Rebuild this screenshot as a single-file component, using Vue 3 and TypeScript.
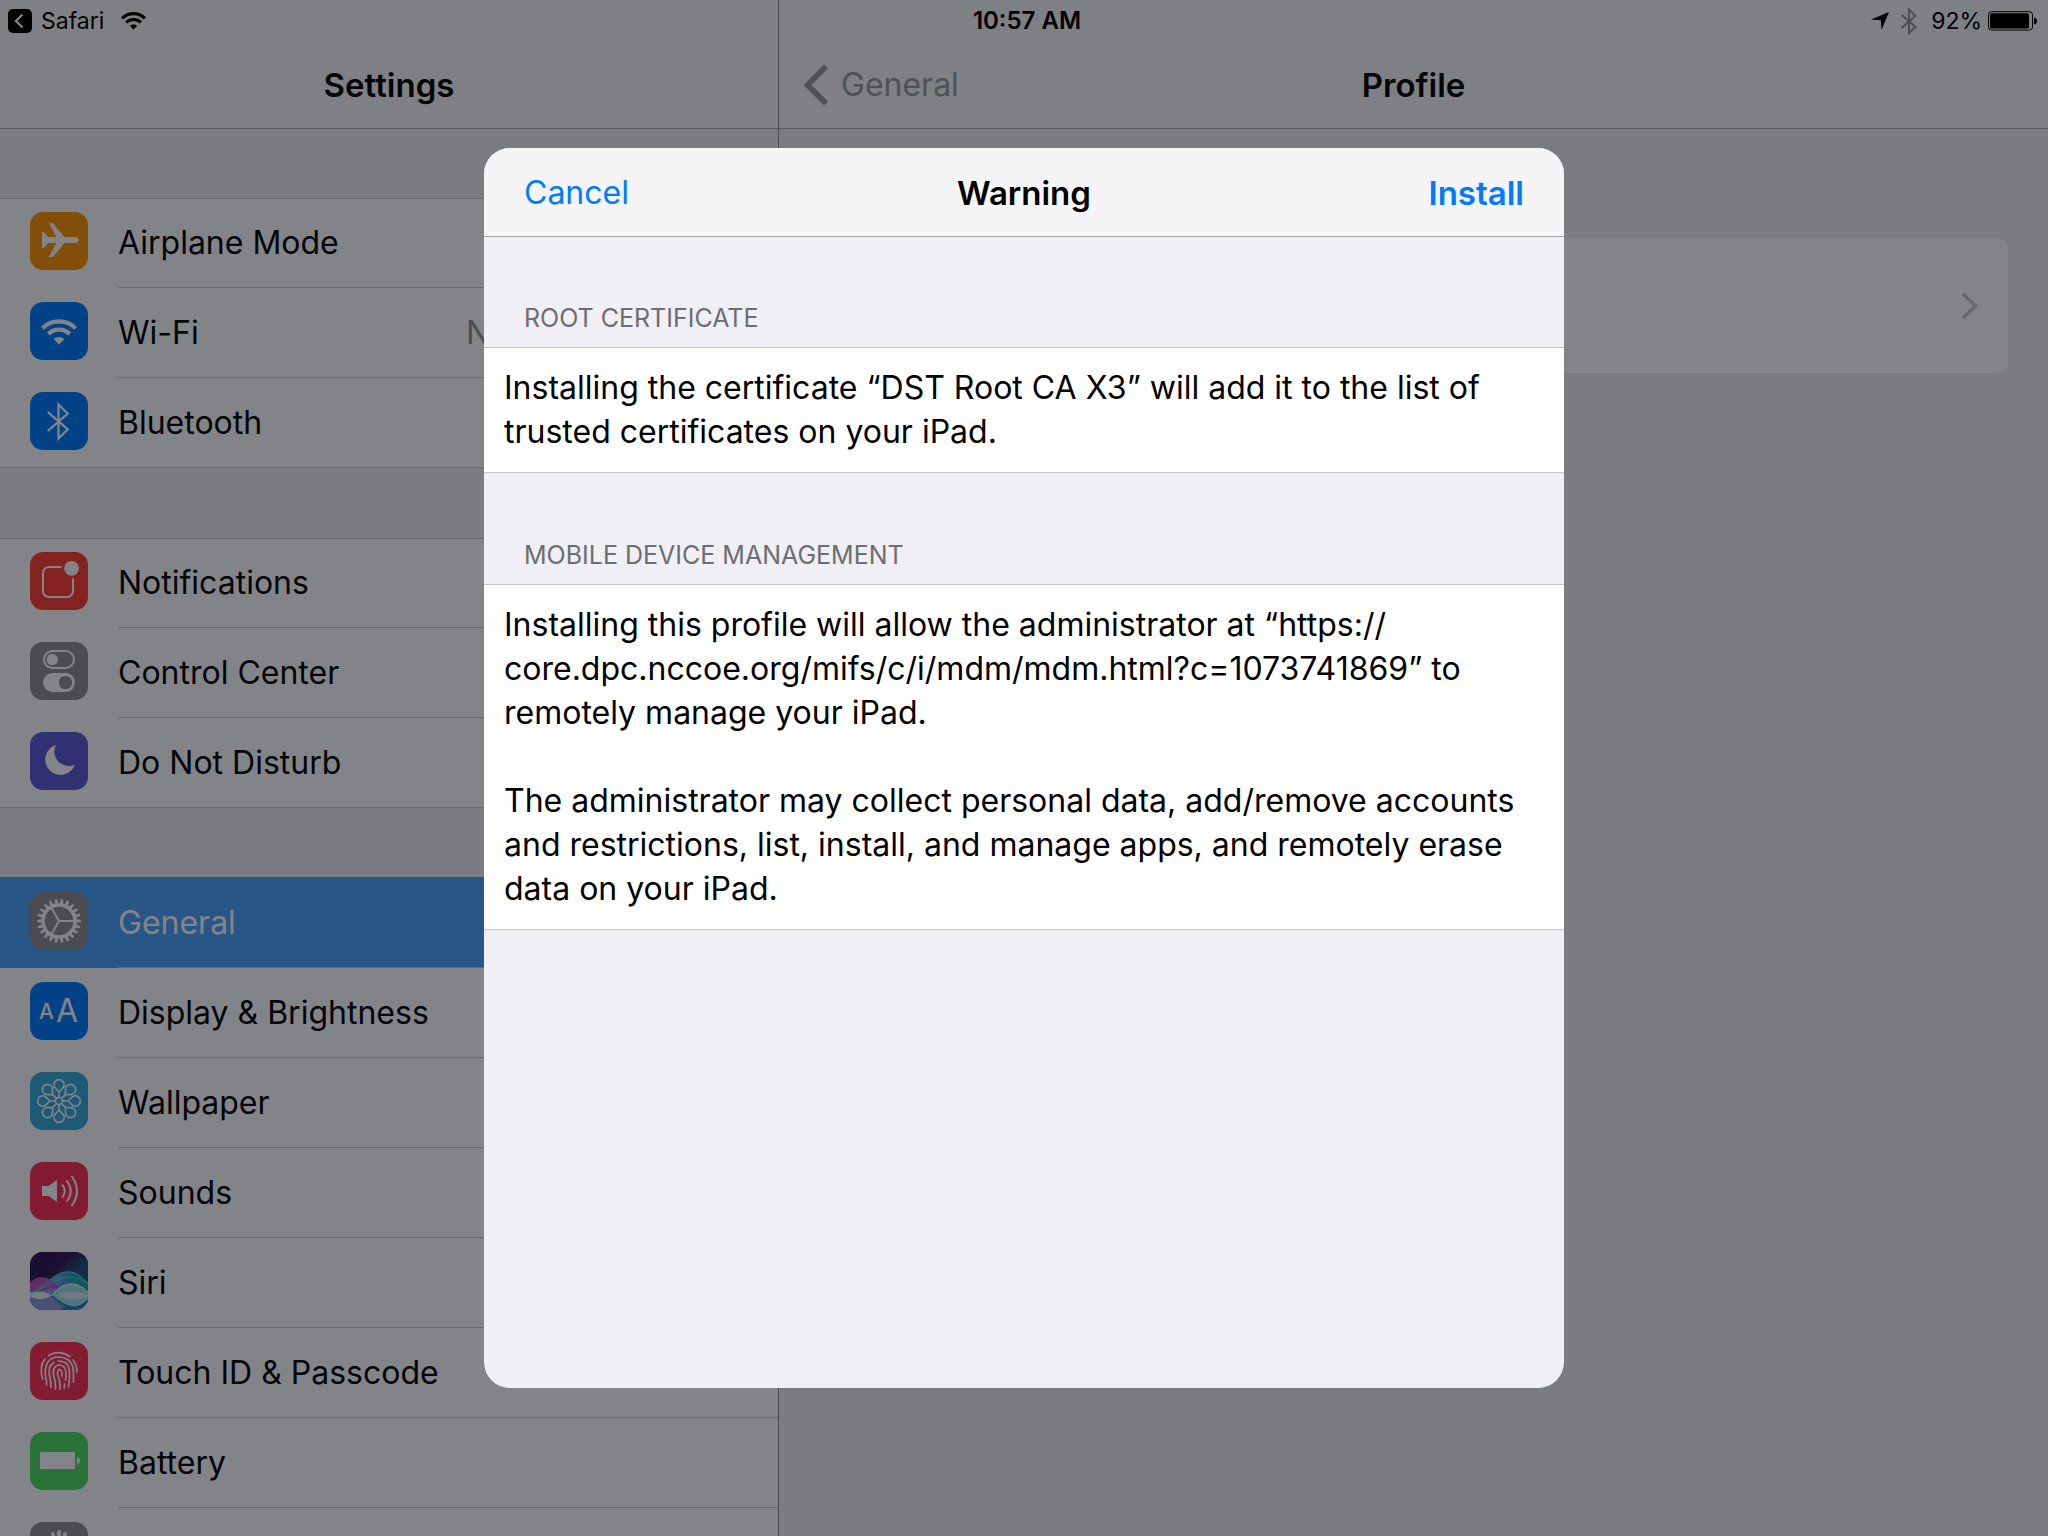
<script setup lang="ts">
import { ref } from 'vue'

interface Row {
  id: string
  label: string
  color: string
  value?: string
}

const groups: Row[][] = [
  [
    { id: 'airplane', label: 'Airplane Mode', color: '#ff9500' },
    { id: 'wifi', label: 'Wi-Fi', color: '#007aff', value: 'N' },
    { id: 'bluetooth', label: 'Bluetooth', color: '#007aff' },
  ],
  [
    { id: 'notifications', label: 'Notifications', color: '#ff3b30' },
    { id: 'control', label: 'Control Center', color: '#8e8e93' },
    { id: 'dnd', label: 'Do Not Disturb', color: '#5856d6' },
  ],
  [
    { id: 'general', label: 'General', color: '#8e8e93' },
    { id: 'display', label: 'Display & Brightness', color: '#007aff' },
    { id: 'wallpaper', label: 'Wallpaper', color: '#34aadc' },
    { id: 'sounds', label: 'Sounds', color: '#ff2d55' },
    { id: 'siri', label: 'Siri', color: '#25104f' },
    { id: 'touch', label: 'Touch ID & Passcode', color: '#ff2d55' },
    { id: 'battery', label: 'Battery', color: '#4cd964' },
    { id: 'privacy', label: '', color: '#8e8e93' },
  ],
]

const selected = ref('general')

// Tapered gear teeth around the centre of a 58 unit square.
const teethCount = 22
const step = (Math.PI * 2) / teethCount
const point = (radius: number, angle: number) =>
  `${(29 + radius * Math.cos(angle)).toFixed(2)} ${(29 + radius * Math.sin(angle)).toFixed(2)}`
const gearTeeth = Array.from({ length: teethCount }, (_, i) => {
  const a = i * step
  return `M${point(17, a - 0.1)}L${point(22, a - 0.05)}L${point(22, a + 0.05)}L${point(17, a + 0.1)}Z`
}).join('')

const petals = Array.from({ length: 8 }, (_, i) => i * 45)
</script>

<template>
  <div class="screen">
    <div class="split">
      <aside class="sidebar">
        <header class="nav">
          <h1 class="nav-title">Settings</h1>
        </header>
        <nav class="list">
          <ul v-for="(group, g) in groups" :key="g" class="group">
            <li v-for="row in group" :key="row.id">
              <button
                type="button"
                class="row"
                :class="{ selected: row.id === selected }"
                :aria-label="row.label || 'Privacy'"
                @click="selected = row.id"
              >
                <svg class="icon" viewBox="0 0 58 58" aria-hidden="true">
                  <rect width="58" height="58" rx="13" :fill="row.color" />
                  <path
                    v-if="row.id === 'airplane'"
                    fill="#fff"
                    d="M12 20q1-.8 1.800 0L18 25h8.300L19.300 12q-.3-1 .7-1h2.200q.8 0 1.300.7L34.300 25H45.500q3.500.3 3.500 3t-3.500 3H34.300L23.500 44.300q-.5.7-1.300.7H20q-1 0-.7-1L26.300 31H18l-4.200 5q-.8.800-1.800 0z"
                  />
                  <g v-else-if="row.id === 'wifi'" fill="none" stroke="#fff" stroke-width="4.200">
                    <path d="M12.400 26.200a23.500 23.500 0 0 1 33.200 0M18.300 32.100a15.200 15.200 0 0 1 21.400 0" />
                    <path d="M29 42.700l-5.400-5.700a8.300 8.300 0 0 1 10.800 0z" fill="#fff" stroke="none" />
                  </g>
                  <path
                    v-else-if="row.id === 'bluetooth'"
                    fill="none"
                    stroke="#fff"
                    stroke-width="2.300"
                    d="M17.800 20L37.700 37.300L28.500 46.500V12.500L37.700 21.700L17.800 39"
                  />
                  <g v-else-if="row.id === 'notifications'">
                    <rect x="13" y="15" width="30" height="30" rx="6" fill="none" stroke="#fff" stroke-width="2" />
                    <circle cx="41.600" cy="16.300" r="10.300" fill="#ff3b30" />
                    <circle cx="41.600" cy="16.300" r="7.400" fill="#fff" />
                  </g>
                  <g v-else-if="row.id === 'control'">
                    <rect x="14" y="9" width="30" height="17" rx="8.500" fill="none" stroke="#fff" stroke-width="2" />
                    <circle cx="22.300" cy="17.500" r="5.700" fill="#fff" />
                    <rect x="13" y="31" width="32" height="19" rx="9.500" fill="#fff" />
                    <circle cx="35.500" cy="40.500" r="6.600" fill="#8e8e93" />
                  </g>
                  <path
                    v-else-if="row.id === 'dnd'"
                    fill="#fff"
                    d="M26 13A15.300 15.300 0 1 0 45 32.500A14.300 14.300 0 0 1 26 13Z"
                  />
                  <g v-else-if="row.id === 'general'">
                    <path :d="gearTeeth" fill="#fff" />
                    <circle cx="29" cy="29" r="16" fill="none" stroke="#fff" stroke-width="3.400" />
                    <path d="M29 29H44M29 29L21.500 16M29 29L21.500 42" stroke="#fff" stroke-width="2" />
                  </g>
                  <g v-else-if="row.id === 'display'" fill="#fff" class="letters">
                    <text x="9" y="37" font-size="21" font-weight="500">A</text>
                    <text x="26" y="40" font-size="32">A</text>
                  </g>
                  <g
                    v-else-if="row.id === 'wallpaper'"
                    fill="none"
                    stroke="#fff"
                    stroke-width="1.600"
                    stroke-linejoin="round"
                  >
                    <circle cx="29" cy="29" r="3.500" />
                    <path
                      v-for="a in petals"
                      :key="a"
                      d="M29 25.500V20L24.200 14.800A5.200 5.200 0 1 1 33.800 14.800L29 20"
                      :transform="`rotate(${a} 29 29)`"
                    />
                  </g>
                  <g v-else-if="row.id === 'sounds'">
                    <path d="M12 24h6.500L27 18v22l-8.500-6H12z" fill="#fff" />
                    <path
                      d="M32.500 23q4.500 6 0 12M37 19q7.500 10 0 20M42 14.500q10 14.500 0 29"
                      fill="none"
                      stroke="#fff"
                      stroke-width="2"
                      stroke-linecap="round"
                    />
                  </g>
                  <g v-else-if="row.id === 'siri'">
                    <defs>
                      <linearGradient id="siri-sky" x1="0" y1="0" x2="1" y2="1">
                        <stop offset="0" stop-color="#2a1062" />
                        <stop offset=".35" stop-color="#321550" />
                        <stop offset=".6" stop-color="#1d5580" />
                      </linearGradient>
                      <linearGradient id="siri-sea" x1="0" y1="0" x2="1" y2="0">
                        <stop offset="0" stop-color="#b478dc" />
                        <stop offset=".4" stop-color="#78a0e6" />
                        <stop offset=".7" stop-color="#289bc8" />
                        <stop offset="1" stop-color="#1ea08c" />
                      </linearGradient>
                      <clipPath id="siri-clip"><rect width="58" height="58" rx="13" /></clipPath>
                    </defs>
                    <g clip-path="url(#siri-clip)">
                      <rect width="58" height="58" fill="url(#siri-sky)" />
                      <path d="M0 31Q9 22 21 28Q35 14 48 23Q54 27 58 31V58H0Z" fill="url(#siri-sea)" />
                      <path d="M0 31Q10 21 22 29L30 36Q18 36 12 39L0 41Z" fill="#c83cb4" opacity=".75" />
                      <path d="M0 41Q12 36 20 28Q36 14 50 24L58 31" fill="none" stroke="#3cc8dc" stroke-width="1.200" />
                      <path d="M6 39Q16 35 25 29Q42 19 58 32" fill="none" stroke="#3cdcb4" stroke-width="1" />
                      <path d="M0 47Q12 50 21 44L34 58H0Z" fill="#8c96dc" />
                      <path d="M30 58Q40 50 58 48V58Z" fill="#2382be" />
                      <path d="M0 41Q12 37 21.500 43.500Q12 50 0 45Z" fill="#dcf5fa" />
                      <path d="M21.500 43.500Q40 22 58 40V48Q44 64 21.500 43.500Z" fill="#9be1eb" />
                      <path d="M26 43.500Q42 36 58 43V45Q42 50 26 43.500Z" fill="#f0f0fa" opacity=".7" />
                      <path d="M21.500 43.500Q44 64 58 48" fill="none" stroke="#146eb4" stroke-width="1.200" />
                      <path d="M21.500 43.500Q40 22 58 40" fill="none" stroke="#f0ffff" stroke-width="1" />
                    </g>
                  </g>
                  <g
                    v-else-if="row.id === 'touch'"
                    fill="none"
                    stroke="#fff"
                    stroke-width="1.700"
                    stroke-linecap="round"
                  >
                    <path d="M18.500 13.500Q29 7.500 40 14.500" />
                    <path d="M12.500 37Q9 24 15 17" />
                    <path d="M43 18Q47 23 47 30" />
                    <path d="M16.500 43Q17 39 15.500 35Q13.500 15 29 15Q44 16 43.500 32V40" />
                    <path d="M21 45.500Q21.500 40 19.500 34Q17.500 24 24 20.500" />
                    <path d="M28 19Q39.500 18.500 39.500 31Q39.500 40 38.500 45" />
                    <path d="M25.500 47Q26 40 23.500 33Q22 23.500 29.500 23Q36 23.500 36 32Q36 37 35.500 38" />
                    <path d="M34.500 42L34.300 46" />
                    <path d="M30 47Q30.500 39 27.500 32Q27.500 27 30 27.500Q32 28 32 34" />
                  </g>
                  <g v-else-if="row.id === 'battery'" fill="#fff">
                    <rect x="10" y="20" width="35" height="17" rx="1" />
                    <path d="M47 25q3 .5 3 3.500t-3 3.500z" />
                  </g>
                  <g v-else stroke="#fff" stroke-width="3.800" stroke-linecap="round" fill="#fff">
                    <path d="M23 12V30M29 10V30M35 12V30M41 18V34M14 30L21 38" />
                    <path d="M23 28H41V38Q38 48 30 48Q24 46 21 38Z" />
                  </g>
                </svg>
                <span class="row-body">
                  <span class="label">{{ row.label }}</span>
                  <span v-if="row.value" class="value">{{ row.value }}</span>
                </span>
              </button>
            </li>
          </ul>
        </nav>
      </aside>

      <main class="detail">
        <header class="nav">
          <button type="button" class="back">
            <svg width="26" height="42" viewBox="0 0 26 42" aria-hidden="true">
              <path d="M23 2.500L4.500 21L23 39.500" fill="none" stroke="currentColor" stroke-width="5.600" />
            </svg>
            <span>General</span>
          </button>
          <h2 class="nav-title">Profile</h2>
        </header>
        <button type="button" class="card" aria-label="Profile details">
          <svg width="18" height="26" viewBox="0 0 18 26" aria-hidden="true">
            <path d="M2 1L14.500 13L2 25" fill="none" stroke="#c7c7cc" stroke-width="3.600" />
          </svg>
        </button>
      </main>
    </div>

    <div class="scrim">
      <section class="dialog" role="dialog" aria-labelledby="dialog-title">
        <header class="dialog-bar">
          <button type="button" class="action">Cancel</button>
          <h2 id="dialog-title" class="dialog-title">Warning</h2>
          <button type="button" class="action primary">Install</button>
        </header>
        <h3 class="section-title">ROOT CERTIFICATE</h3>
        <div class="cell">
          <p>
            Installing the certificate “DST Root CA X3” will add it to the list of trusted
            certificates on your iPad.
          </p>
        </div>
        <h3 class="section-title">MOBILE DEVICE MANAGEMENT</h3>
        <div class="cell">
          <p>
            Installing this profile will allow the administrator at “https://<wbr />core.dpc.nccoe.org/mifs/c/i/mdm/mdm.html?c=1073741869”
            to remotely manage your iPad.
          </p>
          <p>
            The administrator may collect personal data, add/remove accounts and restrictions, list,
            install, and manage apps, and remotely erase data on your iPad.
          </p>
        </div>
      </section>
    </div>

    <div class="status">
      <div class="status-left">
        <svg width="24" height="24" viewBox="0 0 24 24" aria-hidden="true">
          <rect width="24" height="24" rx="5" fill="#000" />
          <path d="M14.500 5.500L8 12L14.500 18.500" fill="none" stroke="#808184" stroke-width="2.400" />
        </svg>
        <a href="#" class="return">Safari</a>
        <svg width="25" height="18" viewBox="11 17 36 26" aria-hidden="true">
          <g fill="none" stroke="#000" stroke-width="4.400">
            <path d="M12.400 26.200a23.500 23.500 0 0 1 33.200 0M18.300 32.100a15.200 15.200 0 0 1 21.400 0" />
            <path d="M29 42.700l-5.400-5.700a8.300 8.300 0 0 1 10.800 0z" fill="#000" stroke="none" />
          </g>
        </svg>
      </div>
      <time class="clock">10:57 AM</time>
      <div class="status-right">
        <svg width="18" height="18" viewBox="0 0 18 18" aria-hidden="true">
          <path d="M18 0L10.500 18L9.800 8.300L0 7.600Z" fill="#000" />
        </svg>
        <svg class="status-bt" width="16" height="28" viewBox="17 9 23 40" aria-hidden="true">
          <path
            fill="none"
            stroke="#4e4f52"
            stroke-width="3"
            d="M17.800 20L37.700 37.300L28.500 46.500V12.500L37.700 21.700L17.800 39"
          />
        </svg>
        <span class="percent">92%</span>
        <svg width="50" height="20" viewBox="0 0 50 20" aria-hidden="true">
          <rect x=".5" y=".7" width="44" height="18.400" rx="3" fill="none" stroke="#000" />
          <rect x="2" y="2.300" width="39" height="15.200" rx="1.500" fill="#000" />
          <path d="M46 6.500q3 .6 3 3.500t-3 3.500z" fill="#000" />
        </svg>
      </div>
    </div>
  </div>
</template>

<style>
body {
  margin: 0;
}
</style>

<style scoped>
.screen {
  position: relative;
  height: 100vh;
  overflow: hidden;
  background: #efeff4;
  color: #000;
  font-family: Inter, Roboto, 'Liberation Sans', sans-serif;
  font-size: 32px;
  line-height: 44px;
}

button {
  margin: 0;
  padding: 0;
  border: 0;
  background: none;
  color: inherit;
  font: inherit;
  text-align: left;
}

h1,
h2,
h3,
p,
ul {
  margin: 0;
  padding: 0;
}

.split {
  display: grid;
  grid-template-columns: 778px minmax(0, 1fr);
  height: 100%;
}

.sidebar {
  min-width: 0;
  overflow: hidden;
}

.nav {
  display: grid;
  grid-template-columns: 1fr auto 1fr;
  align-items: center;
  height: 128px;
  padding-top: 42px;
  box-sizing: border-box;
  background: #f7f7f8;
  box-shadow: 0 1px 0 #acacb0;
}

.nav-title {
  grid-column: 2;
  font-size: 33px;
  font-weight: 600;
}

.group {
  margin-top: 70px;
  list-style: none;
  background: #fff;
}

.row {
  display: flex;
  align-items: stretch;
  gap: 30px;
  width: 100%;
  height: 90px;
  padding-left: 30px;
  box-sizing: border-box;
}

.group li:first-child .row {
  border-top: 1px solid #c8c7cc;
}

.group li:last-child .row {
  border-bottom: 1px solid #c8c7cc;
}

.icon {
  flex: none;
  width: 58px;
  height: 58px;
  margin-top: 14px;
}

.group li:first-child .icon {
  margin-top: 13px;
}

.row-body {
  flex: 1;
  display: flex;
  align-items: center;
  border-bottom: 1px solid #c8c7cc;
}

.group li:last-child .row-body {
  border-bottom: 0;
}

.value {
  margin-left: auto;
  width: 312px;
  color: #8e8e93;
}

.group li:first-child .row.selected {
  border-top-color: #48a3ff;
  background: #48a3ff;
  box-shadow: 0 -1px 0 #48a3ff;
  color: #fff;
}

.letters {
  font-family: Inter, Roboto, sans-serif;
}

.detail {
  display: flex;
  flex-direction: column;
  border-left: 1px solid #8c8c92;
}

.back {
  display: flex;
  align-items: center;
  gap: 12px;
  padding-left: 24px;
  color: #98989b;
}

.card {
  display: flex;
  align-items: center;
  justify-content: flex-end;
  height: 134px;
  margin: 111px 40px 0;
  padding-right: 29px;
  border-radius: 10px;
  background: #fff;
}

.scrim {
  position: absolute;
  inset: 0;
  display: flex;
  align-items: center;
  justify-content: center;
  background: rgba(8, 10, 16, 0.5);
}

.dialog {
  width: 1080px;
  max-width: 100%;
  height: 1240px;
  max-height: 100%;
  overflow: hidden;
  border-radius: 26px;
  background: #efeff4;
}

.dialog-bar {
  position: relative;
  display: grid;
  grid-template-columns: 1fr auto 1fr;
  align-items: center;
  height: 88px;
  padding: 2px 40px 0;
  box-sizing: border-box;
  background: #f5f5f7;
  box-shadow: 0 1px 0 #a7a7aa;
}

.dialog-title {
  font-size: 33px;
  font-weight: 600;
}

.action {
  justify-self: start;
  color: #007aff;
}

.action.primary {
  justify-self: end;
  font-size: 33px;
  font-weight: 600;
}

.section-title {
  padding: 66px 40px 13px;
  color: #6d6d72;
  font-size: 25px;
  font-weight: 400;
  line-height: 32px;
}

.cell {
  display: grid;
  gap: 44px;
  padding: 18px 20px;
  border-top: 1px solid #c8c7cc;
  border-bottom: 1px solid #c8c7cc;
  background: #fff;
}

.status {
  position: absolute;
  top: 0;
  left: 0;
  right: 0;
  display: grid;
  grid-template-columns: 1fr auto 1fr;
  align-items: center;
  height: 42px;
  padding: 0 10px 0 8px;
  font-size: 23px;
  line-height: 28px;
}

.status-left,
.status-right {
  display: flex;
  align-items: center;
}

.status-left {
  gap: 9px;
}

.status-left svg:last-child {
  margin-left: 8px;
}

.return {
  color: #000;
  text-decoration: none;
}

.clock {
  padding-left: 8px;
  font-size: 24px;
  font-weight: 600;
}

.status-right {
  justify-content: flex-end;
}

.status-bt {
  margin: 0 14px 0 12px;
}

.percent {
  margin-right: 6px;
}
</style>
